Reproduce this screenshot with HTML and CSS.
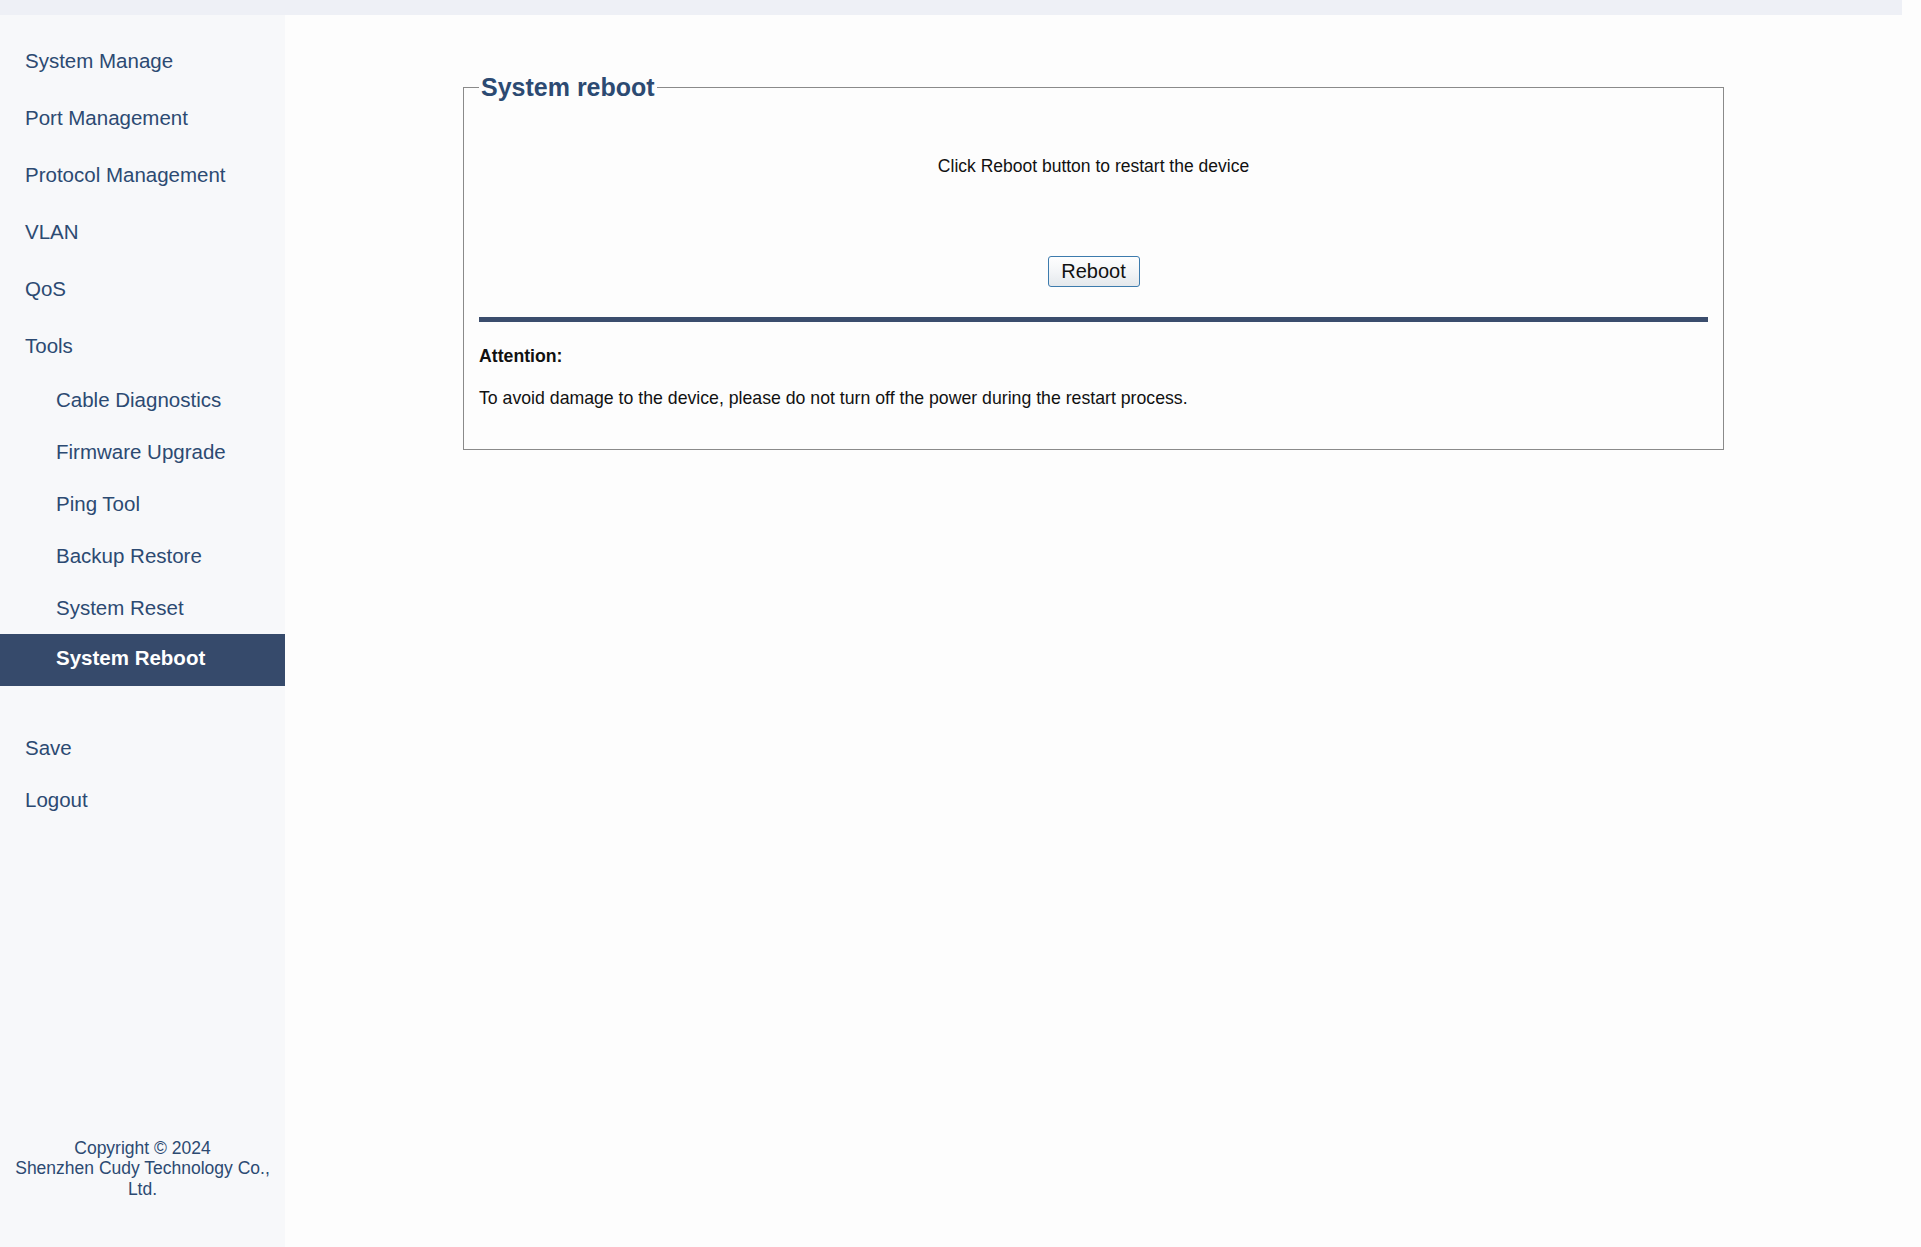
FILE: index.html
```html
<!DOCTYPE html>
<html lang="en">
<head>
    <meta charset="UTF-8">
    <title>System Reboot</title>
    <link rel="stylesheet" href="styles.css">
</head>
<body>
<div class="topBar"></div>
<div class="layout">
    <div class="sideBar">
        <ul class="menu">
            <li class="menuItem">System Manage</li>
            <li class="menuItem">Port Management</li>
            <li class="menuItem">Protocol Management</li>
            <li class="menuItem">VLAN</li>
            <li class="menuItem">QoS</li>
            <li class="menuItem">Tools</li>
            <li class="subItem">Cable Diagnostics</li>
            <li class="subItem">Firmware Upgrade</li>
            <li class="subItem">Ping Tool</li>
            <li class="subItem">Backup Restore</li>
            <li class="subItem">System Reset</li>
            <li class="subItem active">System Reboot</li>
        </ul>
        <ul class="menu extra">
            <li class="menuItem short">Save</li>
            <li class="menuItem short">Logout</li>
        </ul>
        <div class="copyright">
            Copyright &copy; 2024<br>
            Shenzhen Cudy Technology Co., Ltd.
        </div>
    </div>
    <div class="main">
        <fieldset class="panel">
            <legend>System reboot</legend>
            <p class="tip">Click Reboot button to restart the device</p>
            <div class="btnRow">
                <button class="btn" id="reboot">Reboot</button>
            </div>
            <div class="divider"></div>
            <p class="attention">Attention:</p>
            <p class="note">To avoid damage to the device, please do not turn off the power during the restart process.</p>
        </fieldset>
    </div>
</div>
</body>
</html>
```

FILE: styles.css
```css
html, body {
    margin: 0;
    padding: 0;
}

body {
    background: #fdfdfd;
    font-family: "Liberation Sans", Arial, sans-serif;
    color: #111;
}

.topBar {
    height: 15px;
    margin-right: 19px;
    background: #eef0f6;
}

.layout {
    display: flex;
    min-height: 1232px;
}

.sideBar {
    display: flex;
    flex-direction: column;
    width: 285px;
    background: #f7f8fa;
}

.menu {
    list-style: none;
    margin: 0;
    padding: 17px 0 0;
}

.menuItem,
.subItem {
    font-size: 20.5px;
    color: #2c4a72;
    cursor: pointer;
    white-space: nowrap;
}

.menuItem {
    height: 57px;
    line-height: 57px;
    padding-left: 25px;
}

.subItem {
    height: 52px;
    line-height: 51px;
    padding-left: 56px;
}

.subItem.active {
    background: #364a6b;
    color: #fff;
    font-weight: bold;
    line-height: 48px;
}

.extra {
    padding-top: 36px;
}

.menuItem.short {
    height: 52px;
    line-height: 52px;
}

.copyright {
    margin-top: auto;
    padding: 0 10px 48px;
    font-size: 17.5px;
    line-height: 20.5px;
    text-align: center;
    color: #2c4a72;
}

.main {
    flex: 1;
    padding: 58px 197px 0 178px;
}

.panel {
    margin: 0;
    padding: 0 15px 41px;
    border: 1px solid #8a8a8a;
}

.panel legend {
    padding: 0 2px;
    font-size: 25px;
    font-weight: bold;
    color: #2c4a72;
}

.tip {
    margin: 54px 0 0;
    font-size: 17.5px;
    line-height: 20px;
    text-align: center;
}

.btnRow {
    margin-top: 80px;
    text-align: center;
}

.btn {
    width: 92px;
    height: 31px;
    padding: 0;
    font-family: "Liberation Sans", Arial, sans-serif;
    font-size: 20px;
    color: #111;
    border: 1px solid #3d7bad;
    border-radius: 3px;
    background: linear-gradient(#fefefe, #f3f5f7 50%, #e4e8ec);
}

.divider {
    height: 5px;
    margin-top: 30px;
    background: #3b4d6d;
}

.attention {
    margin: 24px 0 0;
    font-size: 17.7px;
    line-height: 20px;
    font-weight: bold;
}

.note {
    margin: 22px 0 0;
    font-size: 17.7px;
    line-height: 20px;
}
```
